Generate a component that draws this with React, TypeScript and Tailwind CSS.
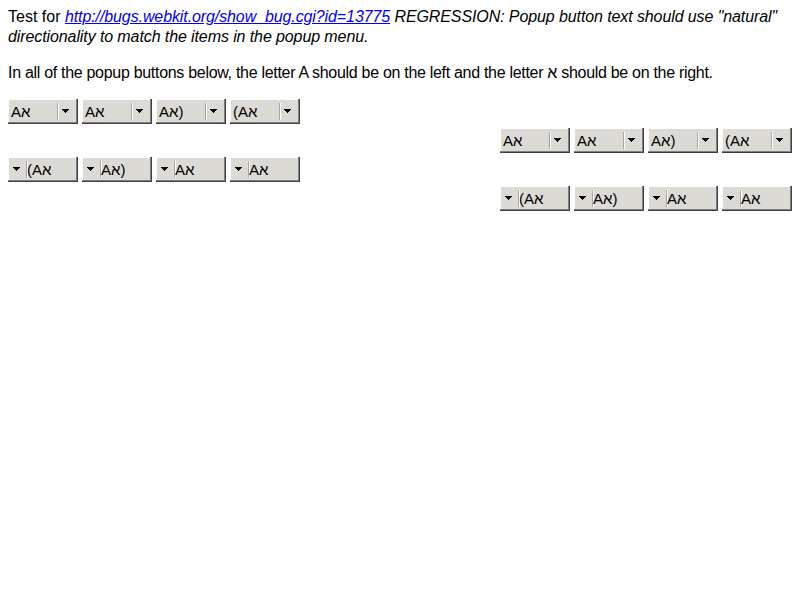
const rowLtr = ["Aא", "Aא", "Aא)", "(Aא"];
const rowRtl = ["(Aא", "Aא)", "Aא", "Aא"];

const Arrow = () => (
  <svg width="7" height="4" viewBox="0 0 7 4" className="block shrink-0" shapeRendering="crispEdges">
    <path d="M0 0h7v1H0z M1 1h5v1H1z M2 2h3v1H2z M3 3h1v1H3z" fill="#000" />
  </svg>
);

const Sep = () => (
  <span className="block w-px h-[17px] bg-white border-l border-[#a8a8a8] shrink-0 box-content" />
);

const btn =
  "flex items-center w-[70px] h-[25px] shrink-0 bg-[#dcdad5] border-r border-b border-[#404040] shadow-[inset_-1px_-1px_0_#808080,inset_1px_1px_0_#ffffff]";

const PopupLeft = ({ label }: { label: string }) => (
  <div className={btn}>
    <span className="flex-1 pl-[3px] text-[15px] leading-none whitespace-nowrap" dir="ltr">
      {label}
    </span>
    <Sep />
    <span className="pl-[3px] pr-[8px]">
      <Arrow />
    </span>
  </div>
);

const PopupRight = ({ label }: { label: string }) => (
  <div className={btn} dir="ltr">
    <span className="pl-[5px] pr-[6px]">
      <Arrow />
    </span>
    <Sep />
    <span className="flex-1 -ml-[1px] text-[15px] leading-none whitespace-nowrap">
      {label}
    </span>
  </div>
);

export default function App() {
  return (
    <div className="m-2 text-[16px] leading-[19px] text-black bg-white" style={{ fontFamily: '"Liberation Sans", Arial, sans-serif' }}>
      <p className="-mt-px leading-[20px]">
        <span className="tracking-[0px]">Test for</span>{" "}
        <i className="tracking-[-0.1px]">
          <a href="#" className="text-[#0000ee] underline">
            http://bugs.webkit.org/show_bug.cgi?id=13775
          </a>{" "}
          REGRESSION: Popup button text should use "natural" directionality to match the items in the popup menu.
        </i>
      </p>
      <p className="mt-4 tracking-[-0.3px]">
        In all of the popup buttons below, the letter A should be on the left and the letter א should be on the right.
      </p>
      <div className="mt-[17px] flex flex-col gap-1">
        <div className="flex gap-1">
          {rowLtr.map((l, i) => (
            <PopupLeft key={i} label={l} />
          ))}
        </div>
        <div className="flex justify-end gap-1">
          {rowLtr.map((l, i) => (
            <PopupLeft key={i} label={l} />
          ))}
        </div>
        <div className="flex gap-1">
          {rowRtl.map((l, i) => (
            <PopupRight key={i} label={l} />
          ))}
        </div>
        <div className="flex justify-end gap-1">
          {rowRtl.map((l, i) => (
            <PopupRight key={i} label={l} />
          ))}
        </div>
      </div>
    </div>
  );
}
